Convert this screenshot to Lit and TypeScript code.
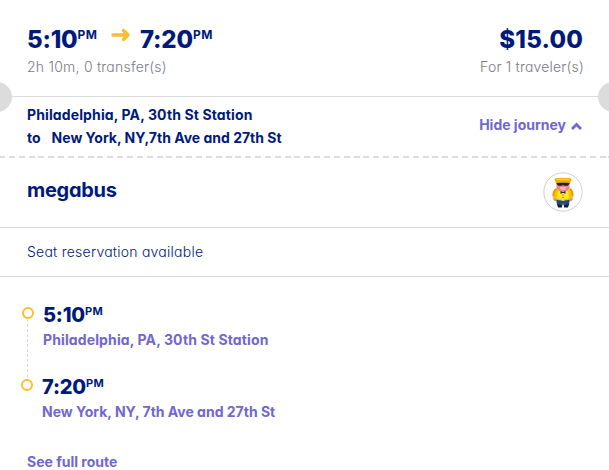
import { LitElement, html, css, svg } from "lit";
import { customElement, property } from "lit/decorators.js";

@customElement("time-label")
class TimeLabel extends LitElement {
  @property() time = "";
  static styles = css`
    :host { display: flex; align-items: flex-start; font-weight: 800; }
    .digits { letter-spacing: var(--digit-spacing, -0.2px); }
    .suffix { font-size: var(--suffix-size, 12px); line-height: var(--suffix-line, 23px); font-weight: 700; letter-spacing: 0.5px; }
  `;
  render() {
    return html`<span class="digits">${this.time}</span><span class="suffix">PM</span>`;
  }
}

@customElement("driver-logo")
class DriverLogo extends LitElement {
  static styles = css`
    :host { display: block; width: 40px; height: 40px; }
    svg { display: block; }
  `;
  render() {
    return html`<svg width="40" height="40" viewBox="0 0 40 40">
      <circle cx="20" cy="20" r="19.2" fill="#fff" stroke="#cfcfd2" stroke-width="1" />
      ${svg`
        <path d="M13 26h14l-1 7-5 1.500-1-3-1 3-5-1.500z" fill="#234a72" />
        <path d="M14 32l5 1.500v2h-4zM21 33.500l5-1.500-1 3.500h-4z" fill="#141b35" />
        <path d="M13 16Q9.500 18 9.300 23Q9.500 27 12.500 27.500Q20 29.500 27.500 27.500Q30.500 27 30.500 22Q30 17 27 16z" fill="#f8c414" />
        <path d="M13.500 17Q10.500 19 10.500 24M27 17Q29.500 19 29.500 24" fill="none" stroke="#ec920b" stroke-width="1.600" />
        <path d="M10 26l3 1v2.500l-2-1zM30 26l-3 1v2.500l2-1z" fill="#d7839f" />
        <path d="M15 19h10l1 7q-6 2-12 0z" fill="#ffe91f" />
        <path d="M13.500 10.500h13v5q-2 4-6.500 4t-6.500-4z" fill="#e9819f" />
        <path d="M17 15h6l-1 3h-4z" fill="#ffb4bd" />
        <path d="M13.500 10.500h13v1.500l-2 1.700h-3.500l-1-1-1 1h-3.500l-2-1.700z" fill="#311a28" />
        <path d="M11.500 7.500Q12 5.500 15 6H25.500Q28.500 6 28.500 8L27 11Q20 9.500 13 11z" fill="#f0ab00" />
        <path d="M13.500 7.500H26" fill="none" stroke="#ffdb3d" stroke-width="1.300" />
        <path d="M17.500 19l2.500 1 2.500-1v2.700l-2.500-1-2.500 1z" fill="#282332" />
        <path d="M20 22.500v1M20 25v1" stroke="#5a431a" />
        <path d="M18.500 28h3" stroke="#d8dce0" stroke-width="1.300" />
      `}
    </svg>`;
  }
}

@customElement("app-root")
class AppRoot extends LitElement {
  static styles = css`
    :host {
      display: block; height: 470px; overflow: hidden; background: #fff;
      color: #001a7b; font-family: Inter, "Liberation Sans", sans-serif;
      font-size: 14px; font-weight: 700; line-height: 23px; white-space: nowrap;
      font-feature-settings: "cv11" 1;
    }
    .row { display: flex; justify-content: space-between; box-sizing: border-box; padding: 0 26px 0 27px; }
    .summary { position: relative; height: 97px; padding-top: 23px; border-bottom: 1px solid #dcdcdc; }
    .notch { position: absolute; top: 82px; width: 30px; height: 30px; border-radius: 50%; background: #dcdcdc; }
    .left { left: -18px; }
    .right { right: -19px; }
    .times { display: flex; height: 32px; font-size: 24px; line-height: 33px; }
    .depart { width: 84px; }
    .arrow { width: 20px; height: 16px; margin: 4px 9px 0 0; }
    .price { font-size: 24px; font-weight: 800; line-height: 33px; height: 32px; text-align: right; letter-spacing: 0.2px; }
    .muted { color: #7b7b86; font-weight: 300; text-align: right; letter-spacing: 0.18px; margin-right: -1px; }
    .summary .muted { line-height: 23px; }
    .summary .duration { text-align: left; letter-spacing: 0.23px; }
    .journey { height: 59px; padding-top: 6px; }
    .from { letter-spacing: 0.12px; }
    .gap { margin-right: 11px; }
    .toggle { display: flex; height: 23px; margin-top: 10px; color: #7067cf; }
    .chevron { margin: 9px 0 0 4px; }
    .dashes { height: 2px; background: repeating-linear-gradient(90deg, #dcdcdc 0 6px, transparent 6px 9.85px) -1px 0; }
    .carrier { height: 70px; padding-top: 14px; border-bottom: 1px solid #dcdcdc; }
    .name { font-size: 20px; line-height: 37px; letter-spacing: -0.3px; }
    .seat { height: 49px; font-weight: 300; line-height: 48px; border-bottom: 1px solid #dcdcdc; letter-spacing: 0.24px; }
    .stops { height: 174px; padding: 24px 0 0 21px; box-sizing: border-box; }
    .stop { display: flex; height: 72px; }
    .rail { display: flex; flex-direction: column; align-items: center; width: 13px; padding-top: 6px; margin-right: 9px; }
    .dot { box-sizing: border-box; width: 12px; height: 12px; border: 2px solid #fbbf2d; border-radius: 50%; flex: none; }
    .line { width: 1px; flex: 1; margin-bottom: -6px; background: repeating-linear-gradient(#d8d8d8 0 3px, transparent 3px 5px); }
    .stop-time { height: 27px; font-size: 20px; line-height: 28px; --suffix-size: 11px; --suffix-line: 20px; }
    .last .rail { margin-left: -1px; }
    .place { color: #7067cf; line-height: 23px; letter-spacing: 0.12px; }
    .arrive { letter-spacing: 0; }
    .route { color: #7067cf; padding-left: 27px; line-height: 22px; }
  `;
  render() {
    return html`
      <div class="row summary">
        <span class="notch left"></span><span class="notch right"></span>
        <div>
          <div class="times">
            <time-label class="depart" time="5:10"></time-label>
            <svg class="arrow" viewBox="0 0 20 16"><path d="M2 8H17M12.500 3.500L17 8L12.500 12.500" fill="none" stroke="#fbbf2d" stroke-width="3.500" stroke-linecap="round" stroke-linejoin="round" /></svg>
            <time-label time="7:20"></time-label>
          </div>
          <div class="muted duration">2h 10m, 0 transfer(s)</div>
        </div>
        <div><div class="price">$15.00</div><div class="muted">For 1 traveler(s)</div></div>
      </div>
      <div class="row journey">
        <div>
          <div class="from">Philadelphia, PA, 30th St Station</div>
          <div class="to"><span class="gap">to</span>New York, NY,7th Ave and 27th St</div>
        </div>
        <div class="toggle">Hide journey<svg class="chevron" width="13" height="9" viewBox="0 0 13 9"><path d="M2 7L6.500 2.500L11 7" fill="none" stroke="#7067cf" stroke-width="2.800" /></svg></div>
      </div>
      <div class="dashes"></div>
      <div class="row carrier"><div class="name">megabus</div><driver-logo></driver-logo></div>
      <div class="row seat">Seat reservation available</div>
      <div class="stops">
        <div class="stop">
          <div class="rail"><i class="dot"></i><i class="line"></i></div>
          <div><time-label class="stop-time" time="5:10"></time-label><div class="place">Philadelphia, PA, 30th St Station</div></div>
        </div>
        <div class="stop last">
          <div class="rail"><i class="dot"></i></div>
          <div><time-label class="stop-time" time="7:20"></time-label><div class="place arrive">New York, NY, 7th Ave and 27th St</div></div>
        </div>
      </div>
      <div class="route">See full route</div>
    `;
  }
}
